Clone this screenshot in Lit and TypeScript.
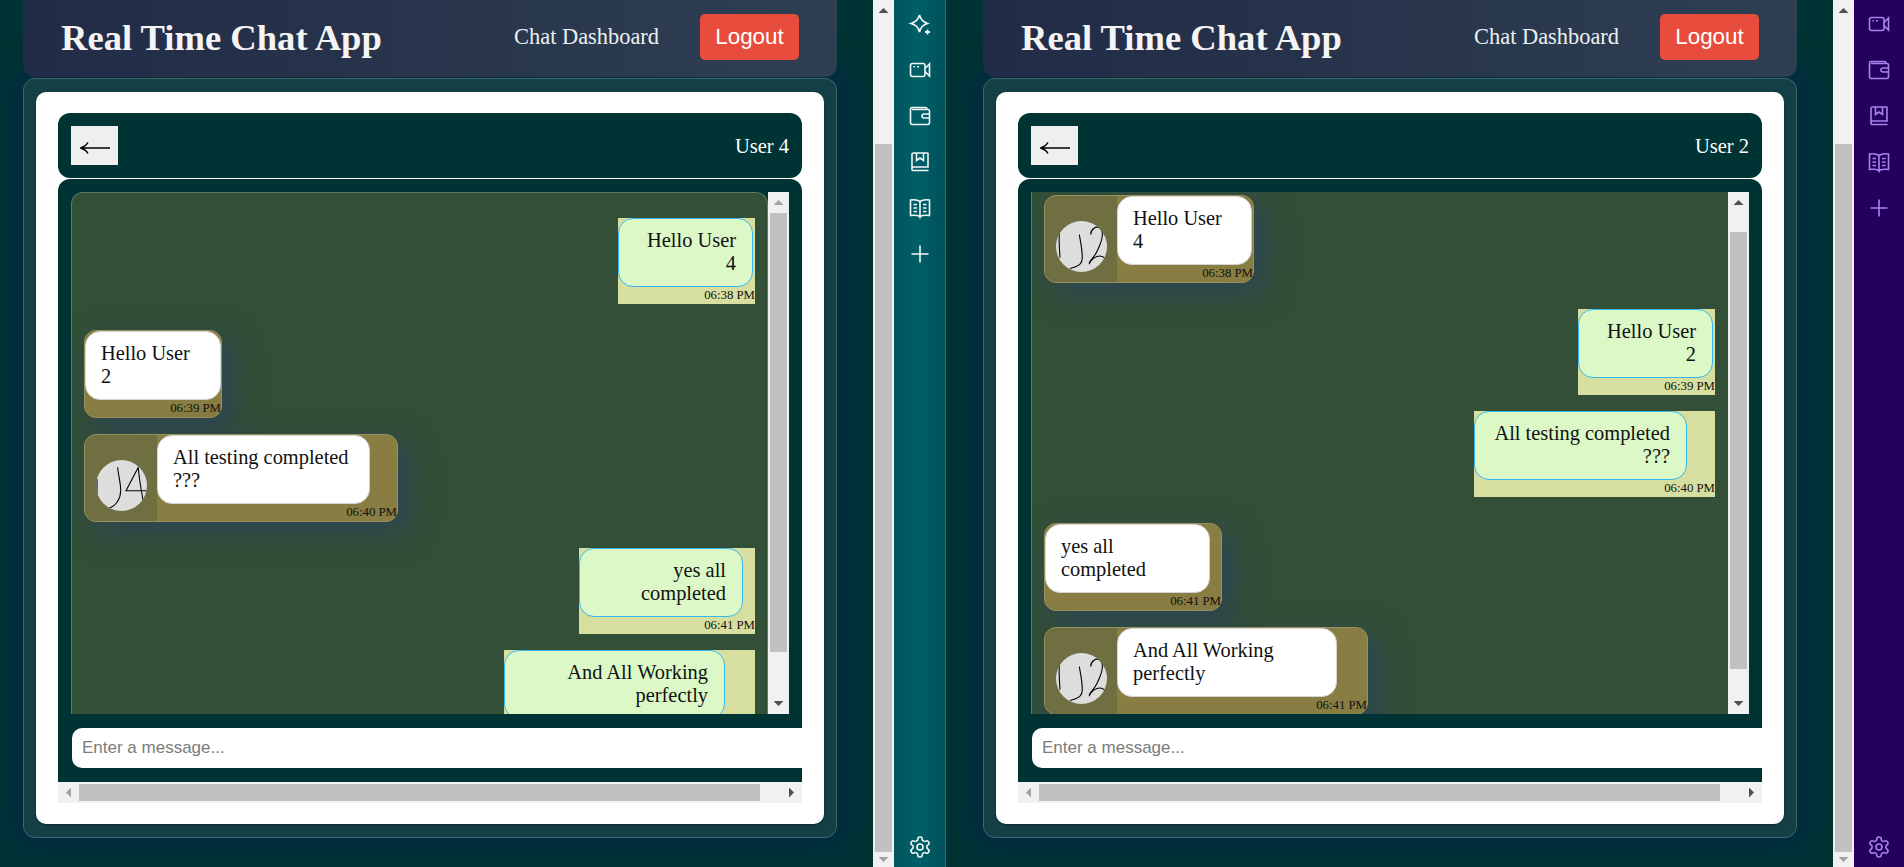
import { LitElement, html, css, svg, nothing } from "lit";
import { customElement, property } from "lit/decorators.js";
import { styleMap } from "lit/directives/style-map.js";

type Msg = {
  text: string;
  time: string;
  own?: boolean;
  avatar?: "j4" | "j2";
  outer: number;
  bubble: number;
};

const PANE_ONE: Msg[] = [
  { text: "Hello User 4", time: "06:38 PM", own: true, outer: 137, bubble: 135 },
  { text: "Hello User 2", time: "06:39 PM", outer: 138, bubble: 136 },
  { text: "All testing completed ???", time: "06:40 PM", avatar: "j4", outer: 314, bubble: 213 },
  { text: "yes all completed", time: "06:41 PM", own: true, outer: 176, bubble: 164 },
  { text: "And All Working perfectly", time: "06:41 PM", own: true, outer: 251, bubble: 221 },
];

const PANE_TWO: Msg[] = [
  { text: "Hello User 4", time: "06:38 PM", avatar: "j2", outer: 210, bubble: 135 },
  { text: "Hello User 2", time: "06:39 PM", own: true, outer: 137, bubble: 135 },
  { text: "All testing completed ???", time: "06:40 PM", own: true, outer: 241, bubble: 213 },
  { text: "yes all completed", time: "06:41 PM", outer: 178, bubble: 165 },
  { text: "And All Working perfectly", time: "06:41 PM", avatar: "j2", outer: 324, bubble: 220 },
];

const ICONS = {
  sparkle: svg`<path d="M11.500 3c1 4.200 3.500 6.800 8 8.500-4.500 1.300-7 3.800-8 8.500-1-4.700-3.500-7.200-8.500-8.500 5-1.700 7.500-4.300 8.500-8.500z"/><path d="M19.500 17.500v5M17 20h5" stroke-width="1.800"/>`,
  video: svg`<rect x="2.500" y="5.500" width="14.500" height="13" rx="2"/><path d="M17 10.500l4.500-4.500v12l-4.500-4.500"/><path d="M5.500 8.800h1.500M9 8.800h2"/>`,
  wallet: svg`<path d="M19 5.500V5a1.500 1.500 0 0 0-1.500-1.500H4A1.500 1.500 0 0 0 2.500 5v14A1.500 1.500 0 0 0 4 20.500h16a1.500 1.500 0 0 0 1.500-1.500V7A1.500 1.500 0 0 0 20 5.500H4"/><path d="M21.500 10H16a2 2 0 0 0-2 2 2 2 0 0 0 2 2h5.500"/>`,
  book: svg`<path d="M4 18.500V4.500A1.500 1.500 0 0 1 5.500 3h14a.5.500 0 0 1 .5.500V17H5.500A1.500 1.500 0 0 0 4 18.500 1.500 1.500 0 0 0 5.500 20.500H20.500"/><path d="M8.500 3v7.500l3.500-2.500 3.500 2.500V3"/>`,
  openbook: svg`<path d="M12 5.500C10 4 6 3.500 2.500 4v15.500c3.500-.5 7.500 0 9.500 1 2-1 6-1.500 9.500-1V4C18 3.500 14 4 12 5.500zM12 5.500v17"/><path d="M5.500 8.500h3.500M5.500 12h3.500M5.500 15.500h3.500M15 8.500h3.500M15 12h3.500M15 15.500h3.500"/>`,
  plus: svg`<path d="M12 3.500v17M3.500 12h17"/>`,
  gear: svg`<path d="M12.220 2h-.44a2 2 0 0 0-2 2v.18a2 2 0 0 1-1 1.730l-.43.25a2 2 0 0 1-2 0l-.15-.08a2 2 0 0 0-2.730.73l-.22.38a2 2 0 0 0 .73 2.730l.15.1a2 2 0 0 1 1 1.720v.51a2 2 0 0 1-1 1.740l-.15.09a2 2 0 0 0-.73 2.730l.22.38a2 2 0 0 0 2.730.73l.15-.08a2 2 0 0 1 2 0l.43.25a2 2 0 0 1 1 1.730V20a2 2 0 0 0 2 2h.44a2 2 0 0 0 2-2v-.18a2 2 0 0 1 1-1.730l.43-.25a2 2 0 0 1 2 0l.15.08a2 2 0 0 0 2.730-.73l.22-.39a2 2 0 0 0-.73-2.730l-.15-.08a2 2 0 0 1-1-1.740v-.5a2 2 0 0 1 1-1.740l.15-.09a2 2 0 0 0 .73-2.730l-.22-.38a2 2 0 0 0-2.730-.73l-.15.08a2 2 0 0 1-2 0l-.43-.25a2 2 0 0 1-1-1.730V4a2 2 0 0 0-2-2z"/><circle cx="12" cy="12" r="3"/>`,
};

@customElement("fake-scrollbar")
export class FakeScrollbar extends LitElement {
  static override styles = css`
    :host {
      display: flex;
      flex: none;
      background: #f1f1f1;
      overflow: hidden;
    }
    :host([horizontal]) {
      flex-direction: row;
      height: 21px;
    }
    :host(:not([horizontal])) {
      flex-direction: column;
      width: 21px;
    }
    .btn {
      flex: none;
      display: flex;
      align-items: center;
      justify-content: center;
      width: 21px;
      height: 21px;
    }
    .thumb {
      flex: none;
      background: #c1c1c1;
    }
    :host([horizontal]) .thumb {
      height: 17px;
      margin-top: 2px;
    }
    :host(:not([horizontal])) .thumb {
      width: 17px;
      margin-left: 2px;
    }
    .spacer {
      flex: 1;
    }
    .arrow {
      width: 10px;
      height: 5px;
      background: #505050;
    }
    .arrow.muted {
      background: #a3a3a3;
    }
    .up {
      clip-path: polygon(50% 0, 100% 100%, 0 100%);
    }
    .down {
      clip-path: polygon(0 0, 100% 0, 50% 100%);
    }
    .left,
    .right {
      width: 5px;
      height: 10px;
    }
    .left {
      clip-path: polygon(100% 0, 100% 100%, 0 50%);
    }
    .right {
      clip-path: polygon(0 0, 100% 50%, 0 100%);
    }
  `;

  @property({ type: Boolean, reflect: true }) horizontal = false;
  @property({ type: Number }) offset = 0;
  @property({ type: Number }) length = 100;
  @property({ type: Boolean }) startMuted = false;
  @property({ type: Boolean }) endMuted = false;
  @property({ type: Number }) endSize = 21;

  override render() {
    const [a, b] = this.horizontal ? ["left", "right"] : ["up", "down"];
    const thumb = this.horizontal
      ? { marginLeft: `${this.offset}px`, width: `${this.length}px` }
      : { marginTop: `${this.offset}px`, height: `${this.length}px` };
    const end = this.horizontal ? {} : { height: `${this.endSize}px` };
    return html`
      <div class="btn"><div class="arrow ${a} ${this.startMuted ? "muted" : ""}"></div></div>
      <div class="thumb" style=${styleMap(thumb)}></div>
      <div class="spacer"></div>
      <div class="btn" style=${styleMap(end)}><div class="arrow ${b} ${this.endMuted ? "muted" : ""}"></div></div>
    `;
  }
}

@customElement("chat-pane")
export class ChatPane extends LitElement {
  static override styles = css`
    :host {
      display: flex;
      flex-direction: column;
      height: 867px;
      overflow: hidden;
      box-sizing: border-box;
      background: #003333;
      font-family: "Liberation Serif", "Times New Roman", serif;
    }
    .top {
      flex: none;
      height: 77px;
      margin-bottom: 1px;
      padding: 0 38px;
      display: flex;
      align-items: center;
      justify-content: space-between;
      border-radius: 0 0 12px 12px;
      background: linear-gradient(90deg, #212b46, #2f3f52);
      position: relative;
      z-index: 1;
    }
    h1 {
      margin: 0 0 3px;
      font-size: 36.6px;
      font-weight: 700;
      color: #f5f3f3;
    }
    .nav {
      display: flex;
      align-items: center;
      gap: 41px;
      margin-bottom: 3px;
    }
    .nav-link {
      font-size: 22.4px;
      color: #ecf0f1;
    }
    .logout {
      width: 99px;
      height: 46px;
      border: 0;
      border-radius: 5px;
      background: #e74c3c;
      color: #fff;
      font: 22.4px "Liberation Sans", Arial, sans-serif;
      padding: 0;
    }
    .frame {
      flex: none;
      height: 760px;
      box-sizing: border-box;
      border: 1px solid #3d686c;
      border-radius: 12px;
      padding: 13px 12px;
      background: #133f45;
      box-shadow: 0 0 28px 12px #022c45;
    }
    .card {
      height: 732px;
      box-sizing: border-box;
      padding: 21px 22px 0;
      border-radius: 10px;
      background: #fff;
      box-shadow: 0 1px 2px rgba(0, 0, 0, 0.4);
    }
    .chat-head {
      height: 65px;
      margin-bottom: 1px;
      box-sizing: border-box;
      padding: 0 13px;
      display: flex;
      align-items: center;
      justify-content: space-between;
      border-radius: 12px;
      background: #003333;
      color: #fff;
      font-size: 20.5px;
    }
    .chat-head span {
      padding-top: 1px;
    }
    .back {
      display: flex;
      align-items: center;
      justify-content: center;
      width: 47px;
      height: 39px;
      padding: 0;
      border: 0;
      background: #efefef;
    }
    .back svg {
      display: block;
      width: 30px;
      height: 12px;
      margin-top: 4px;
      fill: none;
      stroke: #000;
      stroke-width: 1.400;
    }
    .chat-body {
      height: 603px;
      box-sizing: border-box;
      padding: 13px 0 0 13px;
      border-radius: 12px 12px 0 0;
      background: #003333;
      overflow: hidden;
    }
    .msg-row {
      display: flex;
      height: 522px;
      margin-right: 13px;
    }
    .messages {
      flex: 1;
      min-width: 0;
      box-sizing: border-box;
      padding: 25px 12px 0 12px;
      border-left: 1px solid #5d7a60;
      border-top: 1px solid #5d7a60;
      border-right: 1px solid #5d7a60;
      border-radius: 12px 12px 0 0;
      background: #344f37;
      overflow: hidden;
      display: flex;
      flex-direction: column;
    }
    .messages.scrolled {
      padding: 3px 13px 0 12px;
      border-top: 0;
      border-right: 0;
      border-radius: 0;
    }
    .msg {
      flex: none;
      height: 88px;
      box-sizing: border-box;
      display: flex;
    }
    .msg + .msg {
      margin-top: 16px;
    }
    .msg.own + .msg.other,
    .msg.other + .msg.own {
      margin-top: 26px;
    }
    .msg.own {
      align-self: flex-end;
      height: 86px;
      background: #d6dfa0;
    }
    .msg.other {
      align-self: flex-start;
      border: 1px solid #9a9160;
      border-radius: 12px;
      background: #887d42;
      box-shadow: 10px 10px 30px rgba(40, 65, 100, 0.7);
    }
    .avatar-col {
      flex: none;
      width: 72px;
      box-sizing: border-box;
      padding: 25px 0 0 11px;
      background: #6f6f41;
      border-radius: 11px 0 0 11px;
    }
    .avatar {
      display: block;
      width: 51px;
      height: 51px;
      border-radius: 50%;
      background: #dddddd;
    }
    .stack {
      flex: 1;
      min-width: 0;
      display: flex;
      flex-direction: column;
    }
    .bubble {
      flex: none;
      height: 69px;
      box-sizing: border-box;
      padding: 10px 16px;
      border-radius: 15px;
      font-size: 20.4px;
      line-height: 23px;
      color: #111;
    }
    .own .bubble {
      border: 1px solid #34b7f1;
      background: #dcf8c6;
      text-align: right;
    }
    .other .bubble {
      padding-left: 15px;
      border: 1px solid #d4d4d4;
      background: #fff;
    }
    .time {
      height: 17px;
      font-size: 12.8px;
      line-height: 17px;
      color: #111;
      text-align: right;
      white-space: nowrap;
    }
    .entry {
      display: block;
      width: 760px;
      height: 40px;
      box-sizing: border-box;
      margin: 14px 0 14px 1px;
      padding: 0 10px;
      border: 0;
      border-radius: 10px;
      background: #fff;
      font: 17px "Liberation Sans", Arial, sans-serif;
      outline: none;
    }
    .entry::placeholder {
      color: #7b7b7b;
    }
  `;

  @property() user = "";
  @property({ type: Array }) messages: Msg[] = [];
  @property({ type: Boolean }) scrolled = false;

  private renderAvatar(kind: string) {
    const strokes =
      kind === "j4"
        ? svg`<path d="M1 19v15"/><path d="M21.700 7.300C22 14 25 24 24.700 31c-.2 8-5 15-11.400 17"/><path d="M42.300 7.300L30 30.700h21M42.300 7.300c.7 12 3.500 25 5 35"/>`
        : svg`<path d="M3.300 11.800c-.5 8 .2 17 .7 25"/><path d="M23.300 13.500c1 6 3 15 3 23.300 0 5-2 8.500-12.300 10.700"/><path d="M34.700 13.500c0-5 5-9 9-6.500 5 3.500 3 12-3 24-2.500 5-8 10-7.400 11.500 2-3.500 6-7.500 10.700-7.500 2.500 0 5 2 7 4"/>`;
    return html`<div class="avatar-col">
      <svg class="avatar" viewBox="0 0 51 51" fill="none" stroke="#000" stroke-width="1.100">${strokes}</svg>
    </div>`;
  }

  override render() {
    const thumbOffset = this.scrolled ? 19 : 0;
    const thumbLength = this.scrolled ? 437 : 439;
    return html`
      <div class="top">
        <h1>Real Time Chat App</h1>
        <div class="nav">
          <span class="nav-link">Chat Dashboard</span>
          <button class="logout">Logout</button>
        </div>
      </div>
      <div class="frame">
        <div class="card">
          <div class="chat-head">
            <button class="back" aria-label="Back">
              <svg viewBox="0 0 30 12"><path d="M30 6H1M8 .5C6.500 3 4 5 .8 6 4 7 6.500 9 8 11.500"/></svg>
            </button>
            <span>${this.user}</span>
          </div>
          <div class="chat-body">
            <div class="msg-row">
              <div class="messages ${this.scrolled ? "scrolled" : ""}">
                ${this.messages.map(
                  (m) => html`
                    <div class="msg ${m.own ? "own" : "other"}" style="width: ${m.outer}px">
                      ${m.avatar ? this.renderAvatar(m.avatar) : nothing}
                      <div class="stack">
                        <div class="bubble" style="width: ${m.bubble}px">${m.text}</div>
                        <div class="time">${m.time}</div>
                      </div>
                    </div>
                  `
                )}
              </div>
              <fake-scrollbar
                style="height: 522px"
                .offset=${thumbOffset}
                .length=${thumbLength}
                .startMuted=${!this.scrolled}
              ></fake-scrollbar>
            </div>
            <input class="entry" placeholder="Enter a message..." />
          </div>
          <fake-scrollbar horizontal .offset=${0} .length=${681} .startMuted=${true}></fake-scrollbar>
        </div>
      </div>
    `;
  }
}

@customElement("app-root")
export class AppRoot extends LitElement {
  static override styles = css`
    :host {
      display: flex;
      width: 1904px;
      height: 867px;
      overflow: hidden;
    }
    .pane-a {
      flex: none;
      width: 873px;
      box-sizing: border-box;
      padding: 0 36px 0 23px;
    }
    .pane-b {
      flex: none;
      width: 887px;
      box-sizing: border-box;
      padding: 0 36px 0 37px;
    }
    .page-bar {
      height: 867px;
    }
    .rail {
      flex: none;
      display: flex;
      flex-direction: column;
      align-items: center;
      gap: 22px;
      box-sizing: border-box;
      height: 867px;
      padding-top: 12px;
      padding-bottom: 8px;
    }
    .rail-a {
      width: 51px;
      background: linear-gradient(90deg, #00555e, #005f67 45%, #00525b);
      color: #f0f7f7;
    }
    .rail-b {
      width: 50px;
      background: #25005c;
      color: #a584ee;
    }
    .rail svg {
      display: block;
      flex: none;
      width: 24px;
      height: 24px;
      fill: none;
      stroke: currentColor;
      stroke-width: 1.600;
    }
    .rail .bottom {
      margin-top: auto;
    }
    .divider {
      flex: none;
      width: 1px;
      background: #1170c4;
    }
  `;

  private icon(name: keyof typeof ICONS, extra = "") {
    return html`<svg class=${extra} viewBox="0 0 24 24">${ICONS[name]}</svg>`;
  }

  override render() {
    return html`
      <chat-pane class="pane-a" user="User 4" .messages=${PANE_ONE}></chat-pane>
      <fake-scrollbar class="page-bar" .offset=${123} .length=${708} .endMuted=${true} .endSize=${15}></fake-scrollbar>
      <nav class="rail rail-a">
        ${this.icon("sparkle")} ${this.icon("video")} ${this.icon("wallet")} ${this.icon("book")}
        ${this.icon("openbook")} ${this.icon("plus")} ${this.icon("gear", "bottom")}
      </nav>
      <div class="divider"></div>
      <chat-pane class="pane-b" user="User 2" scrolled .messages=${PANE_TWO}></chat-pane>
      <fake-scrollbar class="page-bar" .offset=${123} .length=${708} .endMuted=${true} .endSize=${15}></fake-scrollbar>
      <nav class="rail rail-b">
        ${this.icon("video")} ${this.icon("wallet")} ${this.icon("book")} ${this.icon("openbook")}
        ${this.icon("plus")} ${this.icon("gear", "bottom")}
      </nav>
    `;
  }
}
